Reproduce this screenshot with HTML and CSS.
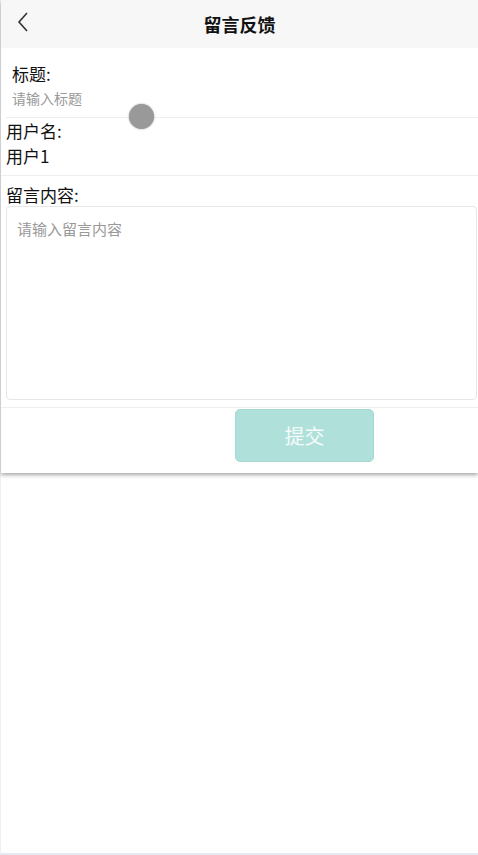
FILE: index.html
```html
<!DOCTYPE html>
<html lang="zh-CN">
<head>
    <meta charset="UTF-8">
    <meta name="viewport" content="width=device-width, initial-scale=1.0">
    <title>留言反馈</title>
    <link rel="stylesheet" href="styles.css">
</head>
<body>

    <div class="page">
        <div class="card">
            <header class="topbar">
                <span class="back">
                    <svg width="14" height="22" viewBox="0 0 14 22"><path d="M11 2 L3 11 L11 20" fill="none" stroke="#333" stroke-width="1.6"/></svg>
                </span>
                <h1>留言反馈</h1>
            </header>

            <div class="field first">
                <label for="title">标题:</label>
                <input type="text" id="title" class="title-input" placeholder="请输入标题">
            </div>

            <div class="field user">
                <label>用户名:</label>
                <p class="value">用户1</p>
            </div>

            <div class="field message">
                <label for="content">留言内容:</label>
                <textarea id="content" placeholder="请输入留言内容"></textarea>
            </div>

            <div class="actions">
                <button class="submit">提交</button>
            </div>
        </div>

        <span class="dot"></span>
    </div>

</body>
</html>
```

FILE: styles.css
```css
*{
    box-sizing: border-box;
    margin: 0;
    padding: 0;
}

body{
    font-family: "Noto Sans CJK SC", "Noto Sans", sans-serif;
    color: #111;
    background: #fff;
}

.page{
    position: relative;
    height: 855px;
    border-left: 1px solid #eef0f4;
    border-bottom: 2px solid #e6e9ef;
}

.card{
    background: #fff;
    box-shadow: 0 2px 4px rgba(0, 0, 0, 0.35);
}

.topbar{
    position: relative;
    display: flex;
    justify-content: center;
    align-items: center;
    height: 48px;
    background: #f7f7f7;
}

.topbar h1{
    font-size: 18px;
    font-weight: bold;
    color: #111;
}

.back{
    position: absolute;
    left: 15px;
    top: 11px;
    display: flex;
}

.field{
    display: flex;
    flex-direction: column;
}

label{
    font-size: 17px;
    line-height: 24px;
    color: #111;
}

.first{
    margin-left: 5px;
    padding: 14px 0 7px 6px;
    border-bottom: 1px solid #eeeeee;
}

.title-input{
    border: none;
    outline: none;
    height: 24px;
    font-family: inherit;
    font-size: 14px;
    color: #333;
}

.title-input::placeholder{
    color: #999;
}

.user{
    padding: 1px 0 6px 5px;
    border-bottom: 1px solid #eeeeee;
}

.value{
    font-size: 17px;
    line-height: 26px;
}

.message{
    padding: 7px 1px 7px 5px;
    border-bottom: 1px solid #eeeeee;
}

.message label{
    line-height: 23px;
}

textarea{
    height: 194px;
    padding: 11px 10px;
    border: 1px solid #e6e6e6;
    border-radius: 4px;
    resize: none;
    outline: none;
    font-family: inherit;
    font-size: 15px;
}

textarea::placeholder{
    color: #999;
}

.actions{
    display: flex;
    padding: 1px 0 11px 234px;
}

.submit{
    width: 139px;
    height: 53px;
    background: #b0e0da;
    border: 1px solid #a6d9d2;
    border-radius: 5px;
    color: #f4fbfa;
    font-family: inherit;
    font-size: 20px;
}

.dot{
    position: absolute;
    left: 128px;
    top: 104px;
    width: 25px;
    height: 25px;
    border-radius: 50%;
    background: #999;
    box-shadow: 0 0 2px #999;
}
```
